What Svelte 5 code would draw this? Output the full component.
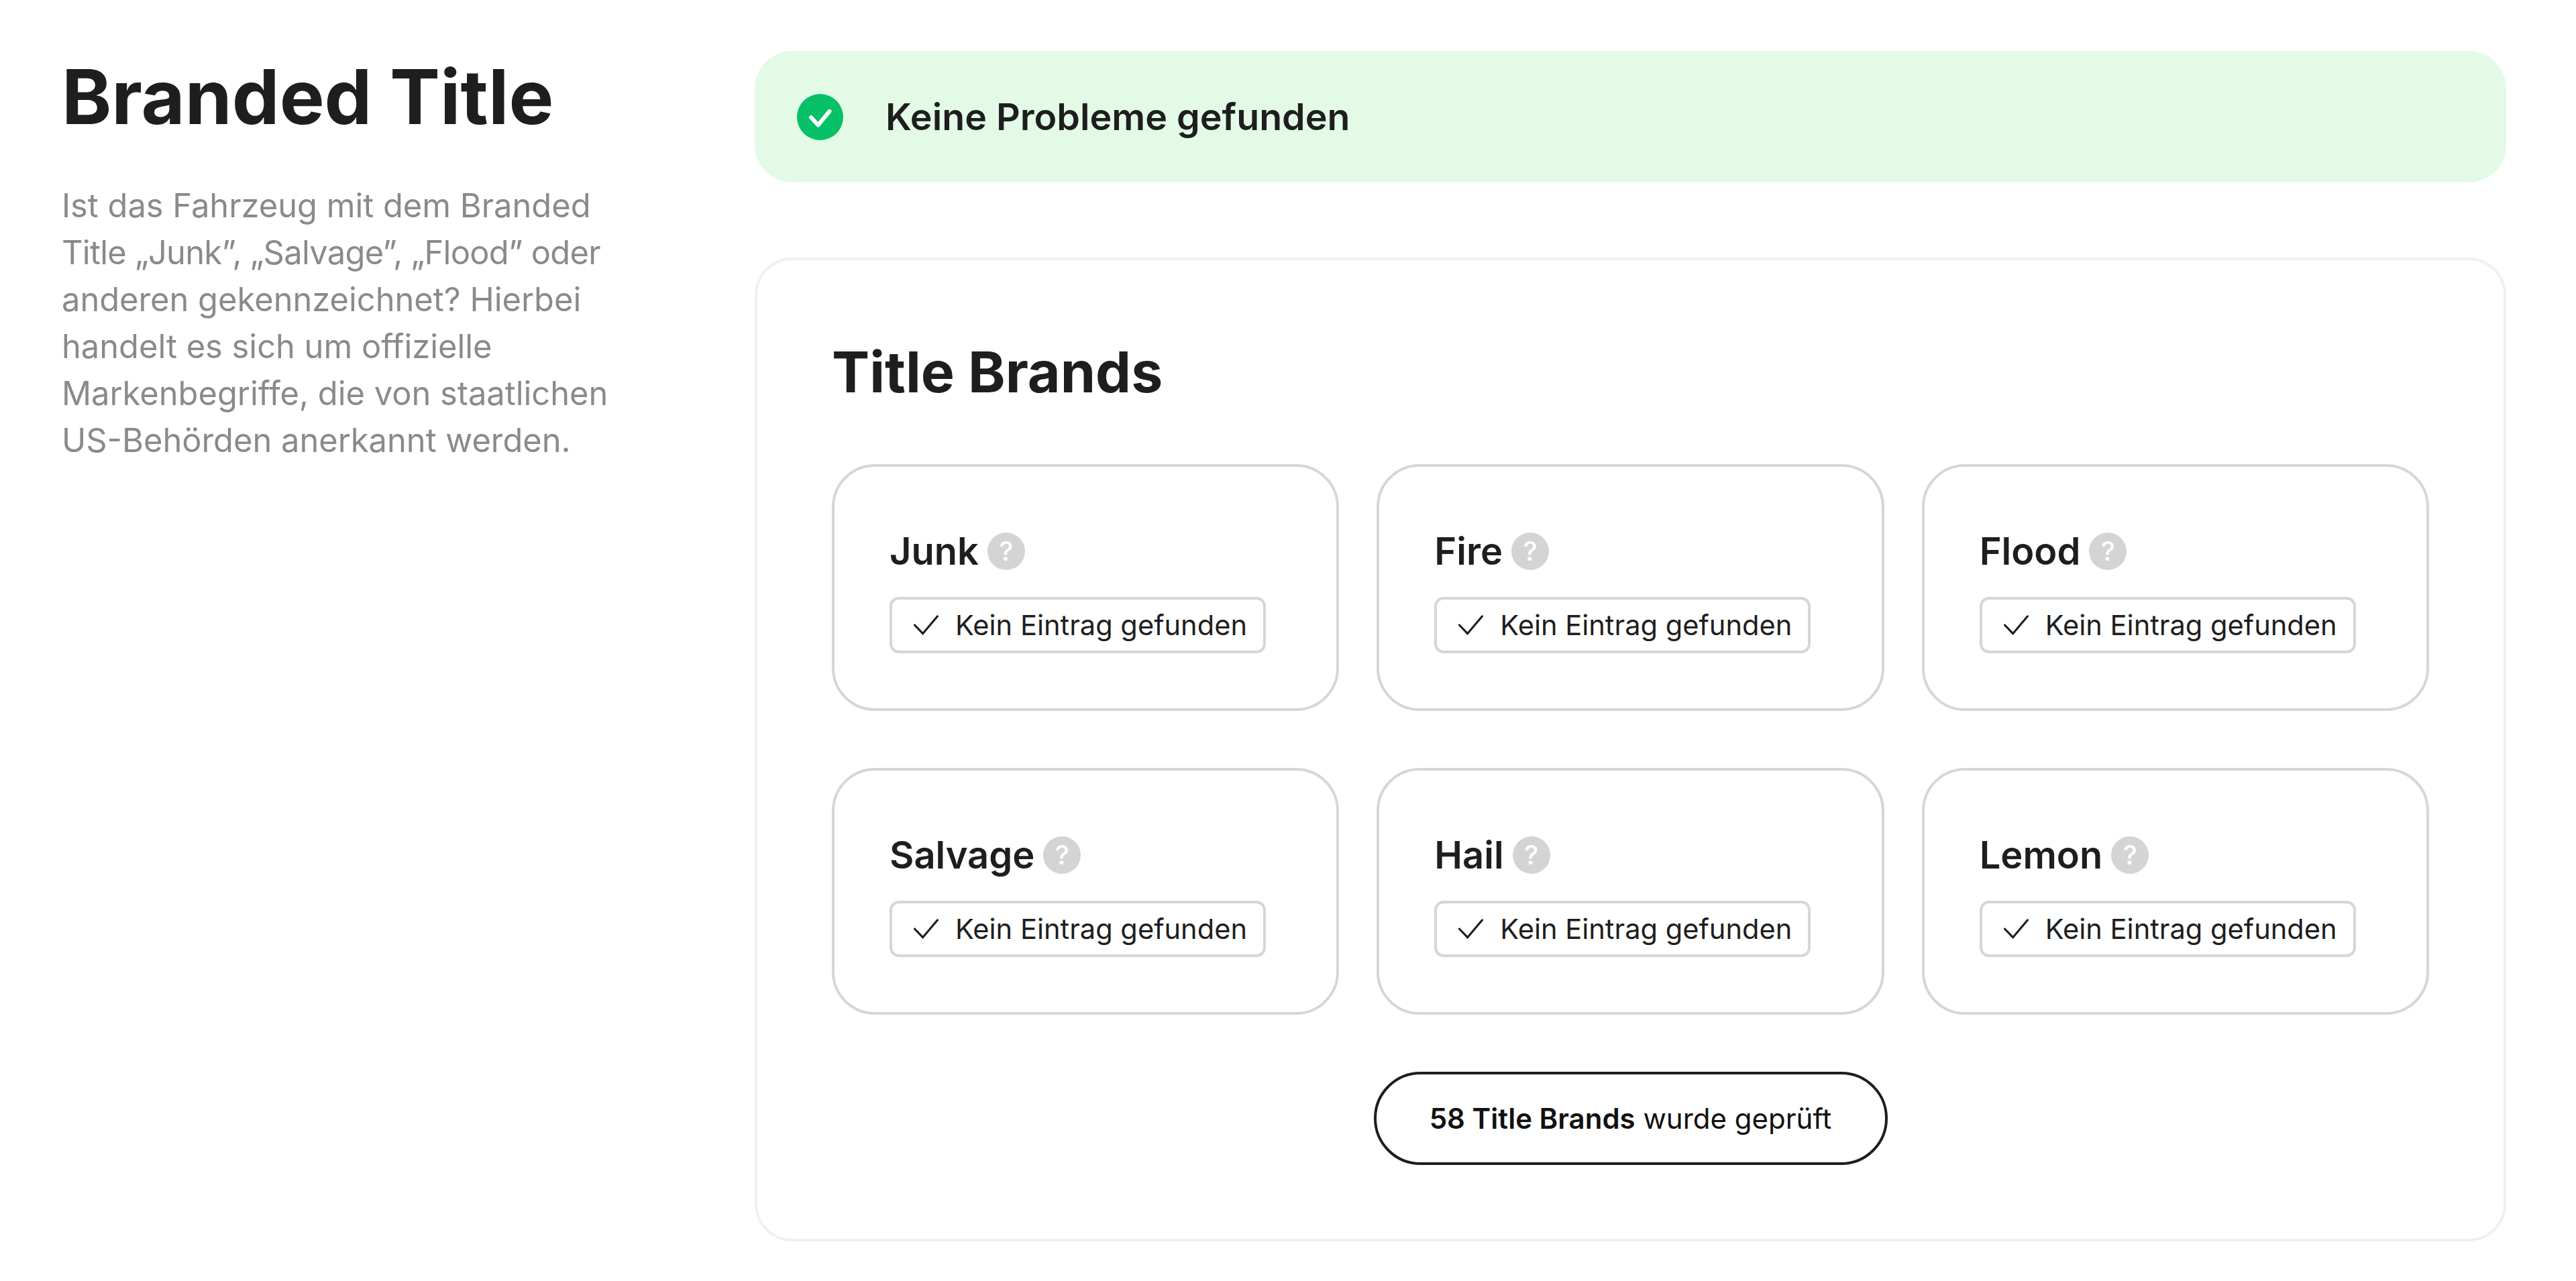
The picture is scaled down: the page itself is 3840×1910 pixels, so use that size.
<script>
	const brands = ['Junk', 'Fire', 'Flood', 'Salvage', 'Hail', 'Lemon'];
</script>

<div class="page">
	<aside class="intro">
		<h1>Branded Title</h1>
		<p>
			Ist das Fahrzeug mit dem Branded <span class="tight">Title „Junk”, „Salvage”, „Flood” oder</span> anderen
			gekennzeichnet? Hierbei handelt es sich um offizielle Markenbegriffe, die von staatlichen
			US-Behörden anerkannt werden.
		</p>
	</aside>

	<main class="content">
		<div class="banner">
			<svg class="banner-icon" viewBox="0 0 69 69" aria-hidden="true">
				<circle cx="34.5" cy="34.5" r="34.5" fill="#06c167" />
				<path d="M21 35l10.5 11.5L48.5 26" fill="none" stroke="#fff" stroke-width="6" stroke-linecap="round" stroke-linejoin="round" />
			</svg>
			<span>Keine Probleme gefunden</span>
		</div>

		<section class="panel">
			<h2>Title Brands</h2>
			<div class="grid">
				{#each brands as brand}
					<div class="card">
						<div class="card-title">
							<h3>{brand}</h3>
							<span class="help">?</span>
						</div>
						<div class="status">
							<svg viewBox="0 0 38 30" aria-hidden="true">
								<path d="M1.5 15L14 28 36.5 1.5" fill="none" stroke="#1e1e1e" stroke-width="3.2" stroke-linecap="round" />
							</svg>
							<span>Kein Eintrag gefunden</span>
						</div>
					</div>
				{/each}
			</div>
			<div class="footer">
				<div class="count"><b>58 Title Brands</b> wurde geprüft</div>
			</div>
		</section>
	</main>
</div>

<style>
	:global(body) {
		background: #fff;
		font-family: Inter, 'Liberation Sans', sans-serif;
		color: #1e1e1e;
	}
	.page {
		display: flex;
		padding: 76px 104px 58px 92px;
		height: 1910px;
		box-sizing: border-box;
	}
	.intro {
		width: 1033px;
		flex: none;
	}
	h1 {
		margin: 0;
		font-size: 112.4px;
		line-height: 136px;
		font-weight: 700;
	}
	.intro p {
		margin: 60px 0 0;
		width: 850px;
		font-size: 48.8px;
		line-height: 70px;
		color: #8a8a8a;
	}
	.tight {
		letter-spacing: -0.7px;
	}
	.content {
		flex: 1;
		min-width: 0;
		display: flex;
		flex-direction: column;
		gap: 112px;
	}
	.banner {
		display: flex;
		align-items: center;
		gap: 63px;
		height: 196px;
		padding-left: 63px;
		background: #e3fae7;
		border-radius: 56px;
		font-size: 55.5px;
		line-height: 64px;
		font-weight: 600;
	}
	.banner-icon {
		width: 69px;
		height: 69px;
		flex: none;
	}
	.panel {
		box-sizing: border-box;
		height: 1467px;
		padding: 114px 111px 0 111px;
		border: 4px solid #f0f0f0;
		border-radius: 56px;
	}
	h2 {
		margin: 0;
		font-size: 84.2px;
		line-height: 104px;
		font-weight: 700;
	}
	.grid {
		display: grid;
		grid-template-columns: repeat(3, minmax(0, 1fr));
		gap: 85px 56px;
		margin-top: 86px;
	}
	.card {
		box-sizing: border-box;
		height: 368px;
		padding: 94px 82px 0;
		border: 4px solid #d6d6d6;
		border-radius: 64px;
	}
	.card-title {
		display: flex;
		align-items: center;
		gap: 13px;
		height: 64px;
	}
	h3 {
		margin: 0;
		font-size: 56px;
		font-weight: 600;
	}
	.help {
		width: 56px;
		height: 56px;
		flex: none;
		border-radius: 50%;
		background: #d4d4d4;
		color: #fff;
		font-size: 40px;
		font-weight: 500;
		line-height: 56px;
		text-align: center;
	}
	.status {
		display: inline-flex;
		align-items: center;
		box-sizing: border-box;
		height: 84px;
		margin-top: 36px;
		padding: 0 24px 0 32px;
		gap: 25px;
		border: 4px solid #d6d6d6;
		border-radius: 14px;
		font-size: 41.6px;
		white-space: nowrap;
	}
	.status svg {
		width: 37px;
		height: 30px;
		flex: none;
	}
	.footer {
		display: flex;
		justify-content: center;
		margin-top: 85px;
	}
	.count {
		box-sizing: border-box;
		width: 766px;
		height: 139px;
		border: 4px solid #1e1e1e;
		border-radius: 70px;
		font-size: 42px;
		line-height: 131px;
		text-align: center;
		color: #111;
	}
	.count b {
		font-weight: 600;
	}
</style>
